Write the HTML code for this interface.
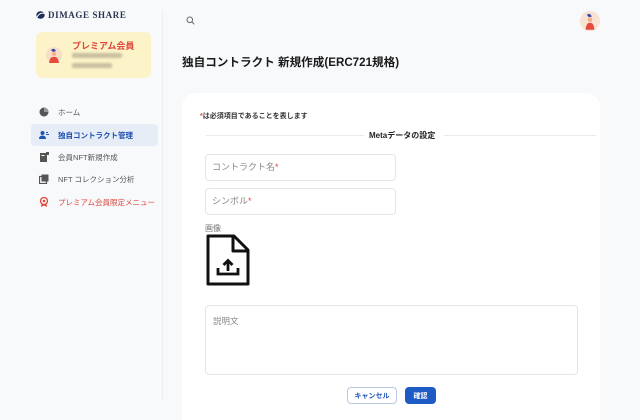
<!DOCTYPE html>
<html><head><meta charset="utf-8"><style>
*{margin:0;padding:0;box-sizing:border-box}
html,body{width:640px;height:420px;overflow:hidden}
body{background:#f8f9fb;font-family:"Liberation Sans","Noto Sans CJK JP",sans-serif;position:relative;color:#222}
.abs{position:absolute}
.divider{left:162px;top:10px;width:1px;height:390px;background:#eceef1}
.logo{left:36px;top:10px;font-family:"Liberation Serif",serif;font-size:9px;font-weight:bold;letter-spacing:.6px;color:#2a3550;display:flex;align-items:center;gap:3px}
.prem{left:36px;top:32px;width:115px;height:46px;background:#fdf3c8;border-radius:6px}
.nav{left:31px;width:127px;height:22px;font-size:7.5px;display:flex;align-items:center;padding-left:8px;gap:9px;color:#555;border-radius:4px;white-space:nowrap}
.ico{width:10px;height:10px;display:inline-block;flex:none}
.card{left:182px;top:93px;width:418px;height:327px;background:#fff;border-radius:14px 14px 0 0}
.inp{border:1px solid #e3e5e8;border-radius:4px;background:#fff;font-size:9px;color:#888;padding-left:6px}
.btn{font-size:7px;font-weight:bold;border-radius:4px;display:flex;align-items:center;justify-content:center}
</style></head><body>
<div class="abs divider"></div>
<div class="abs logo"><svg width="9" height="8" viewBox="0 0 9 8"><ellipse cx="4.5" cy="4" rx="4.2" ry="3.8" fill="#1e2d5a"/><path d="M1 6 Q4 1 8.5 2.5" stroke="#fff" stroke-width="1" fill="none"/></svg>DIMAGE SHARE</div>
<div class="abs prem">
 <svg class="abs" style="left:10px;top:14px" width="16" height="20" viewBox="0 0 16 20"><circle cx="8" cy="9" r="8" fill="#f7dcc8"/><path d="M5 4 Q8 1 10 5 L7 6z" fill="#3b4aa8"/><circle cx="8" cy="8" r="2" fill="#f2b08a"/><path d="M3 17 Q4 10 8 11 Q12 10 13 17z" fill="#e54b3c"/></svg>
 <div class="abs" style="left:36px;top:7px;font-size:9px;color:#e0463c;font-weight:bold">プレミアム会員</div>
 <div class="abs" style="left:36px;top:21px;width:50px;height:5px;background:#c9c0a0;border-radius:2px;filter:blur(1px)"></div>
 <div class="abs" style="left:36px;top:31px;width:40px;height:5px;background:#c9c0a0;border-radius:2px;filter:blur(1px)"></div>
</div>
<div class="abs nav" style="top:101px"><svg class="ico" viewBox="0 0 10 10"><circle cx="5" cy="5" r="4.5" fill="#555"/><path d="M5 5V0.5A4.5 4.5 0 0 1 9.5 5z" fill="#999"/></svg>ホーム</div>
<div class="abs nav" style="top:124px;background:#e7edf6;color:#1f4fb0;font-weight:bold"><svg class="ico" viewBox="0 0 10 10"><circle cx="3.5" cy="3" r="2" fill="#1f55b8"/><path d="M0 9Q0 5.5 3.5 5.5T7 9z" fill="#1f55b8"/><path d="M7 2h2v1H7zM7 4h3v1H7z" fill="#1f55b8"/></svg>独自コントラクト管理</div>
<div class="abs nav" style="top:146px"><svg class="ico" viewBox="0 0 10 10"><rect x="1" y="1" width="7" height="9" fill="#555"/><rect x="7" y="0" width="3" height="3" fill="#555"/><rect x="2.5" y="3" width="3" height="1" fill="#fff"/></svg>会員NFT新規作成</div>
<div class="abs nav" style="top:168px"><svg class="ico" viewBox="0 0 10 10"><rect x="0.5" y="2.5" width="7" height="7" fill="none" stroke="#555" stroke-width="1.2"/><rect x="2.5" y="0.5" width="7" height="7" fill="#555"/></svg>NFT コレクション分析</div>
<div class="abs nav" style="top:191px;color:#e0463c"><svg class="ico" viewBox="0 0 10 10"><circle cx="5" cy="4" r="3.5" fill="none" stroke="#e0463c" stroke-width="1.3"/><circle cx="5" cy="4" r="1.3" fill="#e0463c"/><path d="M2.5 7L2 10 5 8.5 8 10 7.5 7" fill="#e0463c"/></svg>プレミアム会員限定メニュー</div>

<svg class="abs" style="left:186px;top:16px" width="9" height="9" viewBox="0 0 9 9"><circle cx="3.8" cy="3.8" r="2.8" fill="none" stroke="#666" stroke-width="1"/><path d="M6 6l2.3 2.3" stroke="#666" stroke-width="1"/></svg>
<svg class="abs" style="left:580px;top:11px" width="20" height="20" viewBox="0 0 16 16"><circle cx="8" cy="8" r="8" fill="#f7e2d4"/><path d="M5.5 3 Q8 1 9.5 4.5 L7 5z" fill="#3b4aa8"/><circle cx="8" cy="7" r="1.8" fill="#f2b08a"/><path d="M4.5 15 Q5 9 8 9.5 Q11 9 11.5 15z" fill="#e54b3c"/></svg>
<div class="abs" style="left:182px;top:54px;font-size:11.6px;font-weight:bold;color:#1a1a1a;white-space:nowrap">独自コントラクト 新規作成(ERC721規格)</div>

<div class="abs card"></div>
<div class="abs" style="left:200px;top:111px;font-size:7px;font-weight:bold;color:#333"><span style="color:#e0463c">*</span>は必須項目であることを表します</div>
<div class="abs" style="left:206px;top:135px;width:158px;height:1px;background:#e8eaed"></div>
<div class="abs" style="left:444px;top:135px;width:152px;height:1px;background:#e8eaed"></div>
<div class="abs" style="left:369px;top:130px;font-size:8px;font-weight:bold;color:#222">Metaデータの設定</div>
<div class="abs inp" style="left:205px;top:154px;width:191px;height:27px;line-height:25px">コントラクト名<span style="color:#e0463c">*</span></div>
<div class="abs inp" style="left:205px;top:188px;width:191px;height:27px;line-height:25px">シンボル<span style="color:#e0463c">*</span></div>
<div class="abs" style="left:205px;top:223px;font-size:8px;color:#777">画像</div>
<svg class="abs" style="left:205px;top:234px" width="45" height="52" viewBox="0 0 45 52"><path d="M3 2H29L43 16V50H3Z" fill="none" stroke="#111" stroke-width="3" stroke-linejoin="round"/><path d="M28 2V17H43" fill="none" stroke="#111" stroke-width="3" stroke-linejoin="round"/><path d="M13 34v6h20v-6" fill="none" stroke="#111" stroke-width="2.8"/><path d="M23 37V27M18.5 31l4.5-4.5 4.5 4.5" fill="none" stroke="#111" stroke-width="2.8"/></svg>
<div class="abs inp" style="left:205px;top:305px;width:373px;height:70px;padding-top:9px;padding-left:7px;font-size:8.5px">説明文</div>
<div class="abs btn" style="left:347px;top:387px;width:50px;height:17px;border:1px solid #b9c8e0;color:#2256b5;background:#fff">キャンセル</div>
<div class="abs btn" style="left:405px;top:387px;width:31px;height:17px;background:#1f5bc4;color:#fff">確認</div>
</body></html>
